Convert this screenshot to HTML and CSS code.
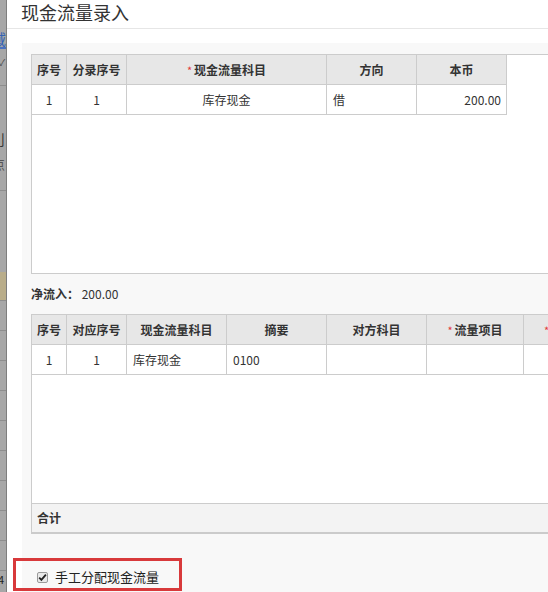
FILE: index.html
```html
<!DOCTYPE html>
<html lang="zh-CN">
<head>
<meta charset="utf-8">
<title>现金流量录入</title>
<link rel="stylesheet" href="styles.css">
</head>
<body>
  <div class="strip">
    <div class="s s1"><span class="blue">域</span></div>
    <div class="s s2"><span class="tick">✓</span></div>
    <div class="s s3"><span class="g1">刂</span><span class="g2">点</span></div>
    <div class="s s4"></div>
    <div class="s s5"></div>
    <div class="s r"></div>
    <div class="s r"></div>
    <div class="s r"></div>
    <div class="s r"></div>
    <div class="s r"></div>
    <div class="s r"></div>
    <div class="s r"></div>
    <div class="s r"></div>
    <div class="s r"></div>
    <div class="s last"><span class="four">4</span></div>
  </div>

  <div class="modal">
    <div class="head"><span class="title">现金流量录入</span></div>
    <div class="body">
      <div class="panel">
        <div class="grid grid1">
          <div class="row hrow t1">
            <div class="cell c35 center">序号</div>
            <div class="cell c60 center">分录序号</div>
            <div class="cell c200 center"><span class="req">*</span>现金流量科目</div>
            <div class="cell c90 center">方向</div>
            <div class="cell c90 center">本币</div>
          </div>
          <div class="row t1">
            <div class="cell c35 center">1</div>
            <div class="cell c60 center">1</div>
            <div class="cell c200 center">库存现金</div>
            <div class="cell c90 left">借</div>
            <div class="cell c90 right">200.00</div>
          </div>
        </div>

        <div class="net"><b>净流入：</b> 200.00</div>

        <div class="grid grid2">
          <div class="row hrow">
            <div class="cell c35 center">序号</div>
            <div class="cell c60 center">对应序号</div>
            <div class="cell c100 center">现金流量科目</div>
            <div class="cell c100 center">摘要</div>
            <div class="cell c100 center">对方科目</div>
            <div class="cell c97 center"><span class="req">*</span>流量项目</div>
            <div class="cell c100 lastc"><span class="req">*</span>流量</div>
          </div>
          <div class="row">
            <div class="cell c35 center">1</div>
            <div class="cell c60 center">1</div>
            <div class="cell c100 left">库存现金</div>
            <div class="cell c100 left">0100</div>
            <div class="cell c100"></div>
            <div class="cell c97"></div>
            <div class="cell c100 lastc"></div>
          </div>
          <div class="spacer"></div>
          <div class="foot">合计</div>
        </div>

        <div class="check-row">
          <span class="cbox"><svg viewBox="0 0 11 11" width="11" height="11"><path d="M2.2 5.6 L4.4 7.9 L8.9 2.6" fill="none" stroke="#222" stroke-width="1.8"/></svg></span>
          <span class="clabel">手工分配现金流量</span>
        </div>
      </div>
    </div>
  </div>

  <div class="mark"></div>
</body>
</html>
```

FILE: styles.css
```css
html {
  margin: 0;
  padding: 0;
  width: 548px;
  height: 592px;
  overflow: hidden;
  background: #fff;
}
body {
  margin: 0;
  padding: 0;
  width: 548px;
  height: 592px;
  overflow: hidden;
  display: flex;
  position: relative;
  background: #fff;
  font-family: "Microsoft YaHei", "Noto Sans CJK SC", "Noto Sans", sans-serif;
  color: #333;
  font-size: 12px;
}

/* background page strip */
.strip {
  flex: none;
  width: 6px;
  height: 592px;
  background: #a7a7a7;
  border-right: 1px solid #7e7e7e;
  display: flex;
  flex-direction: column;
  overflow: hidden;
}
.s {
  flex: none;
  box-sizing: border-box;
  position: relative;
  overflow: hidden;
}
.s1 {
  height: 49px;
  border-bottom: 2px solid #4a72c0;
}
.blue {
  display: block;
  margin: 31px 0 0 -9px;
  font-size: 15px;
  line-height: 15px;
  color: #3563b5;
}
.s2 {
  height: 37px;
  border-bottom: 1px solid #8d8d8d;
}
.tick {
  display: block;
  margin: 9px 0 0 -1px;
  font-size: 9px;
  line-height: 10px;
  color: #444;
}
.s3 {
  height: 105px;
  border-bottom: 1px solid #8d8d8d;
}
.g1 {
  display: block;
  margin: 46px 0 0 -9px;
  font-size: 14px;
  line-height: 14px;
  color: #333;
}
.g2 {
  display: block;
  margin: 11px 0 0 -8px;
  font-size: 13px;
  line-height: 13px;
  color: #555;
}
.s4 {
  height: 81px;
}
.s5 {
  height: 29px;
  background: #b9ad8a;
  border-bottom: 1px solid #8d8d8d;
}
.r {
  height: 30px;
  border-bottom: 1px solid #8d8d8d;
}
.last {
  flex: 1;
}
.four {
  display: block;
  margin: 2px 0 0 -2px;
  font-size: 11px;
  line-height: 12px;
  color: #222;
}

/* modal */
.modal {
  flex: 1;
  min-width: 0;
  height: 592px;
  background: #fff;
  display: flex;
  flex-direction: column;
  overflow: hidden;
}
.head {
  flex: none;
  height: 29px;
  box-sizing: border-box;
  border-bottom: 1px solid #e6e6e6;
  padding-left: 14px;
}
.title {
  display: block;
  font-size: 18px;
  line-height: 24px;
  color: #333;
}
.body {
  flex: 1;
  display: flex;
  flex-direction: column;
  padding: 14px 0 0 15px;
}
.panel {
  flex: 1;
  background: #f8f8f8;
  padding: 11px 0 0 9px;
  display: flex;
  flex-direction: column;
  align-items: flex-start;
}

/* grids */
.grid {
  flex: none;
  width: 620px;
  box-sizing: border-box;
  background: #fff;
  border: 1px solid #cccccc;
  border-right: 0;
  display: flex;
  flex-direction: column;
}
.grid1 {
  height: 220px;
}
.grid2 {
  height: 220px;
  border-bottom: 2px solid #cbcbcb;
}
.row {
  flex: none;
  display: flex;
  height: 30px;
  box-sizing: border-box;
  border-bottom: 1px solid #cccccc;
}
.t1 {
  width: 475px;
}
.hrow {
  background: #e7e7e7;
  font-weight: bold;
  color: #333;
}
.cell {
  flex: none;
  box-sizing: border-box;
  border-right: 1px solid #cccccc;
  line-height: 29px;
  font-size: 12px;
  white-space: nowrap;
  overflow: hidden;
}
.c35 { width: 35px; }
.c60 { width: 60px; }
.c90 { width: 90px; }
.c97 { width: 97px; }
.c100 { width: 100px; }
.c200 { width: 200px; }
.lastc { flex: 1; border-right: 0; padding-left: 20px; }
.center { text-align: center; }
.left { text-align: left; padding-left: 6px; }
.right { text-align: right; padding-right: 5px; }
.req {
  color: #e2393c;
  font-weight: normal;
  font-size: 11px;
  margin-right: 2px;
}
.spacer {
  flex: 1;
}
.foot {
  flex: none;
  height: 29px;
  box-sizing: border-box;
  border-top: 1px solid #cccccc;
  background: #f3f3f3;
  padding-left: 5px;
  line-height: 28px;
  font-weight: bold;
  font-size: 12px;
  color: #333;
}

.net {
  flex: none;
  margin: 12px 0 12px 0;
  line-height: 16px;
  font-size: 12px;
  color: #333;
}
.net b {
  font-weight: bold;
}

.check-row {
  flex: none;
  margin: 33px 0 0 6px;
  display: flex;
  align-items: center;
  height: 20px;
}
.cbox {
  width: 11px;
  height: 11px;
  box-sizing: border-box;
  border: 1px solid #9a9a9a;
  background: #e9e9e9;
  border-radius: 2px;
  display: flex;
  align-items: center;
  justify-content: center;
}
.cbox svg {
  display: block;
  margin: -1px;
}
.clabel {
  margin-left: 7px;
  font-size: 13px;
  line-height: 20px;
  color: #222;
}

/* red annotation box */
.mark {
  position: absolute;
  left: 13px;
  top: 558px;
  width: 169px;
  height: 33px;
  box-sizing: border-box;
  border: 3px solid #d8393b;
}
```
